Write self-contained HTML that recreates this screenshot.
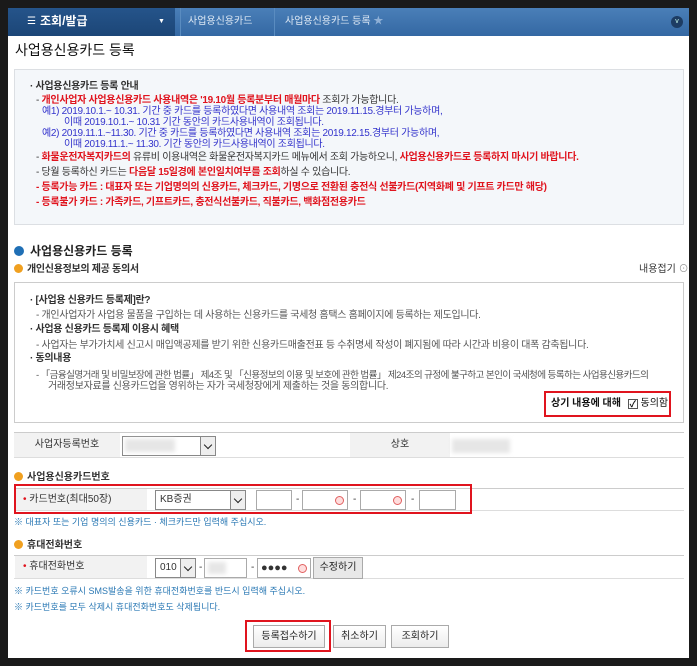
<!DOCTYPE html>
<html><head><meta charset="utf-8"><style>
*{margin:0;padding:0;box-sizing:border-box}
body{width:697px;height:666px;background:#1a1a1a;font-family:"Liberation Sans","Noto Sans CJK KR",sans-serif;font-size:10px;color:#333;position:relative;overflow:hidden}
.a{position:absolute;white-space:nowrap;line-height:12px}
#page{position:absolute;left:8px;top:8px;width:681px;height:650px;background:#fff}
.nav{position:absolute;left:8px;top:8px;width:681px;height:28px;background:linear-gradient(#4a7fb8,#3468a3)}
.navd{position:absolute;left:8px;top:8px;width:167px;height:28px;background:linear-gradient(#25548a,#1c4677)}
.r{color:#e0141e;font-weight:bold}
.b{color:#3333cc}
.bx{position:absolute;border:1px solid #dcdfe3}
.lab{position:absolute;background:#f2f2f2;text-align:center}
.inp{position:absolute;border:1px solid #aaa;background:#fff;height:20px}
.sel{position:absolute;border:1px solid #888;background:#fff;height:20px;font-size:10px;padding:3px 4px;line-height:12px}
.sel:after{content:"";position:absolute;right:0;top:0;width:14px;height:18px;border-left:1px solid #888;background:#eee}
.dd{position:absolute;right:4px;top:5px;width:6px;height:6px;border-right:1.5px solid #222;border-bottom:1.5px solid #222;transform:rotate(45deg);z-index:2}
.btn{position:absolute;border:1px solid #aaa;background:linear-gradient(#fff,#ececec);height:23px;text-align:center;line-height:21px;font-size:10px;color:#222}
.rb{position:absolute;border:2px solid #e0141e}
.dot{display:inline-block;width:9px;height:9px;border-radius:50%;background:#f0a020;margin-right:4px;vertical-align:-1px}
.note{color:#2a78b4;font-size:9px}
.blur{position:absolute;background:#e6e6e6;filter:blur(2px)}
.sm{position:absolute;width:9px;height:9px;border:1px solid #e06060;border-radius:50%;background:#fdd}
.t{letter-spacing:-0.3px}
</style></head><body>
<div id="page"></div>
<div class="nav"></div><div class="navd"></div>
<div class="a" style="left:27px;top:16px;color:#fff;font-size:10px">☰</div>
<div class="a" style="left:40px;top:15px;color:#fff;font-size:12px;font-weight:bold">조회/발급</div>
<div class="a" style="left:158px;top:16px;color:#fff;font-size:7px">▼</div>
<div class="a" style="left:188px;top:16px;color:#dde8f4;font-size:10px">사업용신용카드</div>
<div class="a" style="left:180px;top:8px;width:1px;height:28px;background:#5a8cc0"></div>
<div class="a" style="left:274px;top:8px;width:1px;height:28px;background:#5a8cc0"></div>
<div class="a" style="left:285px;top:16px;color:#dde8f4;font-size:10px">사업용신용카드 등록 <span style="color:#8fb0d6">★</span></div>
<div class="a" style="left:671px;top:16px;width:12px;height:12px;border-radius:50%;background:#1d3c63;color:#cfe;font-size:7px;text-align:center;line-height:12px">v</div>
<div class="a" style="left:15px;top:42px;font-size:14px;line-height:16px;color:#111">사업용신용카드 등록</div>
<div class="bx" style="left:14px;top:69px;width:670px;height:156px;background:#f4f7fa"></div>
<div class="a t" style="left:30px;top:81px;font-weight:bold;font-size:10px">· 사업용신용카드 등록 안내</div>
<div class="a t" style="left:36px;top:95px">- <span class="r">개인사업자 사업용신용카드 사용내역은 '19.10월 등록분부터 매월마다</span> 조회가 가능합니다.</div>
<div class="a b t" style="left:42px;top:106px">예1) 2019.10.1.~ 10.31. 기간 중 카드를 등록하였다면 사용내역 조회는 2019.11.15.경부터 가능하며,</div>
<div class="a b t" style="left:64px;top:117px">이때 2019.10.1.~ 10.31 기간 동안의 카드사용내역이 조회됩니다.</div>
<div class="a b t" style="left:42px;top:128px">예2) 2019.11.1.~11.30. 기간 중 카드를 등록하였다면 사용내역 조회는 2019.12.15.경부터 가능하며,</div>
<div class="a b t" style="left:64px;top:139px">이때 2019.11.1.~ 11.30. 기간 동안의 카드사용내역이 조회됩니다.</div>
<div class="a t" style="left:36px;top:152px">- <span class="r">화물운전자복지카드의</span> 유류비 이용내역은 화물운전자복지카드 메뉴에서 조회 가능하오니, <span class="r">사업용신용카드로 등록하지 마시기 바랍니다.</span></div>
<div class="a t" style="left:36px;top:167px">- 당월 등록하신 카드는 <span class="r">다음달 15일경에 본인일치여부를 조회</span>하실 수 있습니다.</div>
<div class="a r t" style="left:36px;top:182px">- 등록가능 카드 : 대표자 또는 기업명의의 신용카드, 체크카드, 기명으로 전환된 충전식 선불카드(지역화폐 및 기프트 카드만 해당)</div>
<div class="a r t" style="left:36px;top:197px">- 등록불가 카드 : 가족카드, 기프트카드, 충전식선불카드, 직불카드, 백화점전용카드</div>

<div class="a" style="left:14px;top:246px;width:10px;height:10px;border-radius:50%;background:#1f6fb5"></div>
<div class="a" style="left:30px;top:244px;font-size:12px;line-height:14px;font-weight:bold;color:#222">사업용신용카드 등록</div>
<div class="a t" style="left:14px;top:264px;font-weight:bold"><span class="dot"></span>개인신용정보의 제공 동의서</div>
<div class="a" style="left:639px;top:264px">내용접기 <span style="color:#999">⊙</span></div>
<div class="bx" style="left:14px;top:282px;width:670px;height:141px;border-color:#ccc"></div>
<div class="a t" style="left:30px;top:295px;font-weight:bold">· [사업용 신용카드 등록제]란?</div>
<div class="a t" style="left:36px;top:310px;color:#555">- 개인사업자가 사업용 물품을 구입하는 데 사용하는 신용카드를 국세청 홈택스 홈페이지에 등록하는 제도입니다.</div>
<div class="a t" style="left:30px;top:324px;font-weight:bold">· 사업용 신용카드 등록제 이용시 혜택</div>
<div class="a t" style="left:36px;top:340px;color:#555">- 사업자는 부가가치세 신고시 매입액공제를 받기 위한 신용카드매출전표 등 수취명세 작성이 폐지됨에 따라 시간과 비용이 대폭 감축됩니다.</div>
<div class="a t" style="left:30px;top:353px;font-weight:bold">· 동의내용</div>
<div class="a" style="left:36px;top:370px;color:#555;letter-spacing:-0.6px;font-size:9.6px">- 「금융실명거래 및 비밀보장에 관한 법률」 제4조 및 「신용정보의 이용 및 보호에 관한 법률」 제24조의 규정에 불구하고 본인이 국세청에 등록하는 사업용신용카드의</div>
<div class="a t" style="left:48px;top:381px;color:#555">거래정보자료를 신용카드업을 영위하는 자가 국세청장에게 제출하는 것을 동의합니다.</div>
<div class="rb" style="left:544px;top:391px;width:127px;height:26px"></div>
<div class="a" style="left:551px;top:398px;font-weight:bold;color:#111">상기 내용에 대해 <span style="display:inline-block;width:10px;height:10px;border:1px solid #555;font-size:9px;line-height:8px;text-align:center;vertical-align:-1px;margin-left:4px">✓</span> <span style="font-weight:normal">동의함</span></div>

<div class="a" style="left:14px;top:432px;width:670px;height:1px;background:#ccc"></div>
<div class="a" style="left:14px;top:457px;width:670px;height:1px;background:#ddd"></div>
<div class="lab" style="left:14px;top:433px;width:106px;height:24px;line-height:24px">사업자등록번호</div>
<div class="lab" style="left:350px;top:433px;width:100px;height:24px;line-height:24px">상호</div>
<div class="sel" style="left:122px;top:436px;width:94px"><div class="dd"></div></div>
<div class="blur" style="left:125px;top:439px;width:50px;height:13px"></div>
<div class="blur" style="left:452px;top:439px;width:58px;height:14px"></div>

<div class="a" style="left:14px;top:472px;font-weight:bold"><span class="dot"></span>사업용신용카드번호</div>
<div class="a" style="left:14px;top:488px;width:670px;height:1px;background:#ccc"></div>
<div class="a" style="left:14px;top:510px;width:670px;height:1px;background:#ddd"></div>
<div class="lab" style="left:15px;top:489px;width:132px;height:21px;line-height:21px;text-align:left;padding-left:8px"><span style="color:#e0141e">•</span> 카드번호(최대50장)</div>
<div class="sel" style="left:155px;top:490px;width:91px">KB증권<div class="dd"></div></div>
<div class="inp" style="left:256px;top:490px;width:36px"></div>
<div class="a" style="left:296px;top:494px">-</div>
<div class="inp" style="left:302px;top:490px;width:46px"><div class="sm" style="right:3px;top:5px"></div></div>
<div class="a" style="left:353px;top:494px">-</div>
<div class="inp" style="left:360px;top:490px;width:46px"><div class="sm" style="right:3px;top:5px"></div></div>
<div class="a" style="left:411px;top:494px">-</div>
<div class="inp" style="left:419px;top:490px;width:37px"></div>
<div class="rb" style="left:14px;top:484px;width:458px;height:30px"></div>
<div class="a note" style="left:14px;top:516px">※ 대표자 또는 기업 명의의 신용카드 · 체크카드만 입력해 주십시오.</div>

<div class="a" style="left:14px;top:540px;font-weight:bold"><span class="dot"></span>휴대전화번호</div>
<div class="a" style="left:14px;top:555px;width:670px;height:1px;background:#ccc"></div>
<div class="a" style="left:14px;top:578px;width:670px;height:1px;background:#ddd"></div>
<div class="lab" style="left:15px;top:556px;width:132px;height:22px;line-height:22px;text-align:left;padding-left:8px"><span style="color:#e0141e">•</span> 휴대전화번호</div>
<div class="sel" style="left:155px;top:558px;width:41px">010<div class="dd"></div></div>
<div class="a" style="left:199px;top:562px">-</div>
<div class="inp" style="left:204px;top:558px;width:43px"><div class="blur" style="left:3px;top:3px;width:18px;height:12px"></div></div>
<div class="a" style="left:251px;top:562px">-</div>
<div class="inp" style="left:257px;top:558px;width:54px;font-size:11px;padding-left:3px;line-height:18px">●●●●<div class="sm" style="right:3px;top:5px"></div></div>
<div class="btn" style="left:313px;top:557px;width:50px;height:22px;background:#e8e8e8;line-height:20px">수정하기</div>
<div class="a note" style="left:14px;top:585px">※ 카드번호 오류시 SMS발송을 위한 휴대전화번호를 반드시 입력해 주십시오.</div>
<div class="a note" style="left:14px;top:601px">※ 카드번호를 모두 삭제시 휴대전화번호도 삭제됩니다.</div>

<div class="btn" style="left:253px;top:625px;width:72px">등록접수하기</div>
<div class="rb" style="left:245px;top:620px;width:86px;height:32px"></div>
<div class="btn" style="left:333px;top:625px;width:53px">취소하기</div>
<div class="btn" style="left:391px;top:625px;width:58px">조회하기</div>
</body></html>
